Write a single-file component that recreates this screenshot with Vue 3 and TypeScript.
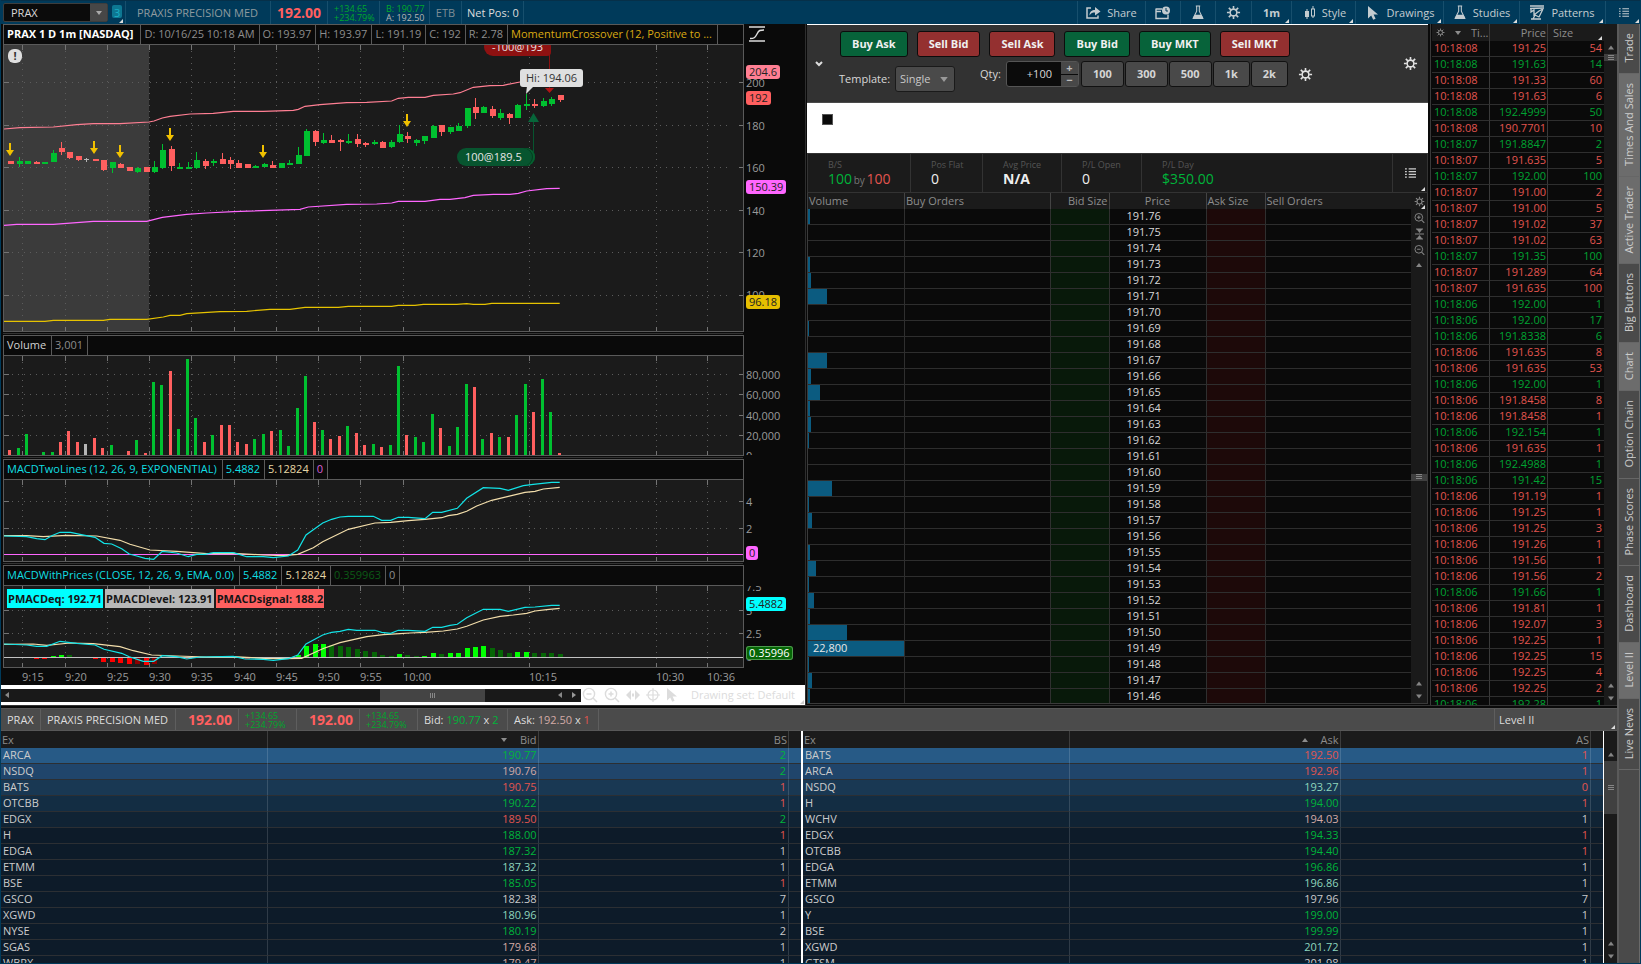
<script setup lang="ts">
type Tone = 'g' | 'r' | 'w' | 'p' | 't' | 'n'
type Pt = [number, number]

const quoteCells = ['D: 10/16/25 10:18 AM', 'O: 193.97', 'H: 193.97', 'L: 191.19', 'C: 192', 'R: 2.78']

/* ---- plot geometry ---- */
const PLOT_W = 739
const LEFT = 4
const pct = (v: number, total: number): string => `${(v / total) * 100}%`
const timeMarks = [
  { x: 18, label: '9:15' }, { x: 61, label: '9:20' }, { x: 103, label: '9:25' }, { x: 145, label: '9:30' },
  { x: 187, label: '9:35' }, { x: 230, label: '9:40' }, { x: 272, label: '9:45' }, { x: 314, label: '9:50' },
  { x: 356, label: '9:55' }, { x: 399, label: '10:00' }, { x: 525, label: '10:15' }, { x: 652, label: '10:30' },
  { x: 703, label: '10:36' },
]
const slotX = (k: number): number => Math.round(10.3 + 8.45 * k) - LEFT

/* series are sampled at three units per plot unit */
const line = (pts: Pt[], top: number): string =>
  pts.map(([x, y]) => `${(x / 3 - LEFT).toFixed(1)},${(y / 3 - top).toFixed(1)}`).join(' ')

/* colour, high, body top, body bottom, low */
const rawCandles: [Tone, number, number, number, number][] = [
  ['r', 483, 483, 491, 491], ['g', 471, 483, 491, 500], ['g', 483, 483, 491, 493], ['r', 483, 486, 491, 491],
  ['g', 486, 486, 491, 491], ['g', 450, 459, 485, 487], ['r', 426, 444, 456, 465], ['r', 457, 457, 474, 476],
  ['r', 468, 468, 479, 483], ['w', 473, 478, 481, 487], ['r', 477, 477, 482, 482], ['r', 480, 480, 510, 513],
  ['g', 486, 486, 504, 518], ['r', 488, 492, 503, 503], ['r', 501, 501, 513, 513], ['g', 500, 504, 515, 518],
  ['r', 501, 501, 515, 515], ['g', 483, 501, 515, 518], ['g', 432, 450, 503, 506], ['r', 437, 447, 498, 513],
  ['g', 489, 501, 507, 507], ['g', 486, 501, 507, 507], ['g', 456, 480, 504, 508], ['r', 477, 483, 497, 507],
  ['g', 477, 484, 489, 498], ['r', 459, 477, 491, 491], ['r', 471, 480, 491, 507], ['r', 479, 489, 503, 503],
  ['r', 492, 492, 503, 503], ['g', 495, 498, 503, 503], ['g', 488, 492, 500, 500], ['r', 483, 495, 503, 503],
  ['g', 489, 489, 503, 503], ['g', 480, 489, 494, 494], ['g', 441, 465, 491, 491], ['g', 387, 393, 467, 467],
  ['r', 389, 393, 426, 438], ['g', 399, 420, 429, 431], ['r', 405, 420, 429, 429], ['r', 416, 420, 425, 453],
  ['g', 402, 423, 429, 431], ['r', 402, 417, 431, 441], ['r', 426, 429, 435, 440], ['g', 420, 426, 431, 434],
  ['r', 423, 426, 443, 443], ['g', 420, 426, 440, 444], ['g', 376, 402, 425, 428], ['r', 396, 408, 416, 428],
  ['g', 416, 420, 429, 437], ['g', 408, 408, 422, 431], ['g', 375, 378, 413, 413], ['r', 375, 375, 395, 408],
  ['g', 381, 381, 395, 402], ['g', 369, 378, 392, 392], ['g', 324, 324, 378, 384], ['r', 294, 321, 338, 357],
  ['g', 318, 321, 338, 338], ['r', 318, 327, 347, 354], ['g', 327, 340, 353, 360], ['r', 339, 342, 353, 372],
  ['g', 311, 315, 353, 353], ['g', 282, 312, 317, 330], ['r', 297, 312, 318, 324], ['g', 294, 303, 317, 321],
  ['g', 291, 297, 311, 318], ['r', 285, 285, 299, 306],
]
const lvl = (v: number): number => Math.round(v / 3) - 45
const candles = rawCandles.map(([tone, h, t, b, l], k) => ({
  tone, x: slotX(k), h: lvl(h), t: lvl(t), bh: Math.max(1, lvl(b) - lvl(t)), wh: Math.max(1, lvl(l) - lvl(h)),
}))

const volHeights = [5, 7, 21, 0, 3, 3, 13, 24, 13, 11, 17, 7, 10, 0, 4, 15, 2, 73, 70, 84, 26, 96, 37, 13, 20, 30, 30,
  13, 11, 16, 21, 24, 25, 9, 47, 79, 33, 25, 16, 19, 29, 22, 10, 11, 8, 10, 89, 20, 18, 13, 41, 27, 9, 28, 71, 68, 16,
  22, 18, 18, 40, 71, 43, 76, 43, 2]
const volumes = volHeights.map((h, k) => ({ h, x: slotX(k) - 2, tone: rawCandles[k][0] }))

const histo: Record<number, [number, string]> = {
  0: [-2, 'dr'], 1: [-1, 'dr'], 2: [-2, 'r'], 3: [-5, 'r'], 4: [-5, 'r'], 5: [4, 'b'], 6: [7, 'b'], 7: [7, 'd'],
  9: [-2, 'r'], 10: [-5, 'r'], 11: [-14, 'r'], 12: [-14, 'r'], 13: [-17, 'r'], 14: [-20, 'r'], 15: [-20, 'dr'],
  16: [-23, 'r'], 17: [-20, 'dr'], 19: [-3, 'dr'], 20: [-3, 'dr'], 21: [-5, 'r'], 28: [-5, 'r'], 29: [-4, 'r'],
  31: [-3, 'r'], 34: [6, 'b'], 35: [33, 'b'], 36: [40, 'b'], 37: [40, 'b'], 38: [36, 'd'], 39: [34, 'd'],
  40: [30, 'd'], 41: [25, 'd'], 42: [19, 'd'], 43: [16, 'd'], 44: [7, 'd'], 45: [4, 'd'], 46: [10, 'b'],
  47: [6, 'd'], 48: [4, 'd'], 49: [4, 'b'], 50: [13, 'b'], 51: [10, 'd'], 52: [13, 'b'], 53: [13, 'b'],
  54: [28, 'b'], 55: [31, 'b'], 56: [34, 'b'], 57: [28, 'd'], 58: [22, 'd'], 59: [13, 'd'], 60: [16, 'b'],
  61: [16, 'b'], 62: [13, 'd'], 63: [13, 'd'], 64: [13, 'd'], 65: [10, 'd'],
}
const histoBars = Object.entries(histo).map(([k, [v, c]]) => {
  const h = Math.max(1, Math.round(Math.abs(v) / 3))
  return { x: slotX(Number(k)) - 2, y: v > 0 ? 71 - h : 71, h, c }
})

const upper = line([[12, 387], [60, 383], [160, 381], [230, 374], [280, 371], [360, 371], [447, 366], [462, 363],
  [487, 354], [510, 349], [570, 342], [640, 340], [700, 334], [790, 334], [880, 331], [895, 328], [915, 319],
  [960, 314], [1040, 308], [1100, 307], [1175, 303], [1195, 295], [1225, 292], [1275, 292], [1300, 286],
  [1360, 282], [1380, 278], [1420, 262], [1470, 257], [1510, 256], [1560, 246], [1640, 238]], 45)
const middle = line([[12, 676], [50, 673], [160, 673], [280, 664], [440, 664], [487, 652], [560, 643], [620, 639],
  [700, 635], [900, 628], [925, 621], [1040, 613], [1130, 612], [1175, 609], [1195, 604], [1275, 604], [1320, 598],
  [1350, 598], [1395, 593], [1420, 586], [1480, 583], [1530, 583], [1555, 580], [1580, 573], [1640, 566],
  [1679, 565]], 45)
const lower = line([[12, 964], [135, 964], [160, 961], [310, 961], [330, 958], [440, 958], [490, 951], [510, 946],
  [540, 946], [560, 941], [660, 935], [740, 934], [810, 928], [870, 928], [915, 922], [1015, 922], [1045, 919],
  [1175, 919], [1195, 916], [1245, 916], [1270, 913], [1370, 913], [1400, 911], [1420, 913], [1455, 913],
  [1475, 910], [1679, 910]], 45)
const macd = line([[12, 228], [80, 230], [110, 236], [135, 239], [155, 227], [180, 217], [212, 217], [240, 223],
  [285, 232], [312, 250], [335, 252], [365, 266], [388, 282], [410, 288], [435, 295], [461, 298], [487, 274],
  [530, 279], [565, 290], [590, 283], [615, 283], [640, 278], [700, 278], [740, 290], [790, 290], [820, 293],
  [865, 288], [893, 270], [918, 225], [940, 209], [968, 189], [995, 178], [1020, 171], [1045, 169], [1120, 169],
  [1145, 181], [1172, 181], [1195, 172], [1225, 172], [1275, 176], [1298, 157], [1325, 157], [1372, 145],
  [1400, 115], [1450, 83], [1500, 85], [1525, 91], [1570, 77], [1600, 73], [1655, 67], [1679, 67]], 20)
const signal = line([[12, 227], [80, 227], [130, 230], [200, 226], [290, 228], [360, 241], [390, 253], [450, 270],
  [530, 274], [620, 281], [700, 280], [790, 285], [850, 287], [893, 283], [940, 263], [968, 245], [1045, 208],
  [1125, 189], [1172, 187], [1225, 182], [1275, 178], [1325, 173], [1345, 167], [1372, 163], [1400, 154],
  [1430, 138], [1475, 121], [1525, 109], [1575, 97], [1605, 94], [1630, 87], [1679, 82]], 20)
const macd2 = line([[12, 552], [80, 555], [110, 559], [140, 559], [180, 544], [205, 547], [230, 550], [285, 555],
  [312, 568], [365, 580], [388, 590], [430, 604], [461, 604], [487, 587], [530, 590], [560, 597], [600, 591],
  [700, 589], [735, 597], [790, 598], [820, 601], [865, 596], [893, 585], [918, 552], [968, 525], [995, 517],
  [1020, 514], [1045, 508], [1070, 511], [1125, 511], [1145, 517], [1172, 520], [1195, 511], [1225, 511],
  [1275, 514], [1298, 502], [1325, 502], [1350, 496], [1372, 493], [1400, 473], [1450, 448], [1500, 448],
  [1525, 454], [1575, 442], [1605, 441], [1655, 436], [1679, 436]], 126)
const signal2 = line([[12, 553], [100, 552], [140, 556], [210, 549], [280, 551], [360, 560], [400, 572], [455, 585],
  [530, 588], [620, 591], [700, 590], [790, 595], [850, 596], [905, 595], [968, 566], [1020, 548], [1060, 539],
  [1100, 530], [1150, 524], [1200, 521], [1230, 519], [1275, 517], [1330, 513], [1372, 507], [1400, 499],
  [1450, 480], [1500, 469], [1540, 465], [1580, 460], [1605, 453], [1640, 449], [1679, 445]], 126)

const arrows: Pt[] = [[6, 98], [90, 96], [116, 100], [166, 83], [259, 100], [403, 69]]

interface Panel {
  id: string
  h: number
  grid: number[]
  labels: { y: number; t: string }[]
  tags: { y: number; t: string; c: string }[]
  head: { t: string; c: string }[]
}
const panels: Panel[] = [
  {
    id: 'price', h: 286, grid: [37, 80, 122, 165, 207, 250],
    labels: [{ y: 38, t: '200' }, { y: 81, t: '180' }, { y: 123, t: '160' }, { y: 166, t: '140' }, { y: 208, t: '120' }, { y: 250, t: '100' }],
    tags: [{ y: 27, t: '204.6', c: 'pink' }, { y: 53, t: '192', c: 'coral' }, { y: 142, t: '150.39', c: 'magenta' }, { y: 257, t: '96.18', c: 'gold' }],
    head: [{ t: 'PRAX 1 D 1m [NASDAQ]', c: 'strong' }, ...quoteCells.map((t) => ({ t, c: 'dim' })), { t: 'MomentumCrossover (12, Positive to ...', c: 'amber' }],
  },
  {
    id: 'volume', h: 99, grid: [18, 38, 59, 79],
    labels: [{ y: 19, t: '80,000' }, { y: 39, t: '60,000' }, { y: 60, t: '40,000' }, { y: 80, t: '20,000' }, { y: 100, t: '0' }],
    tags: [], head: [{ t: 'Volume', c: 'light' }, { t: '3,001', c: 'dim' }],
  },
  {
    id: 'macd', h: 81, grid: [21, 48],
    labels: [{ y: 22, t: '4' }, { y: 49, t: '2' }], tags: [{ y: 73, t: '0', c: 'magenta' }],
    head: [{ t: 'MACDTwoLines (12, 26, 9, EXPONENTIAL)', c: 'cyan' }, { t: '5.4882', c: 'cyan' }, { t: '5.12824', c: 'sand' }, { t: '0', c: 'violet' }],
  },
  {
    id: 'macdp', h: 81, grid: [24, 47],
    labels: [{ y: 1, t: '7.5' }, { y: 25, t: '5' }, { y: 48, t: '2.5' }, { y: 71, t: '0' }],
    tags: [{ y: 18, t: '5.4882', c: 'aqua' }, { y: 67, t: '0.35996', c: 'forest' }],
    head: [{ t: 'MACDWithPrices (CLOSE, 12, 26, 9, EMA, 0.0)', c: 'cyan' }, { t: '5.4882', c: 'cyan' }, { t: '5.12824', c: 'sand' }, { t: '0.359963', c: 'moss' }, { t: '0', c: 'dim' }],
  },
]

/* ---- order entry ---- */
const orderButtons = [
  { t: 'Buy Ask', side: 'buy' }, { t: 'Sell Bid', side: 'sell' }, { t: 'Sell Ask', side: 'sell' },
  { t: 'Buy Bid', side: 'buy' }, { t: 'Buy MKT', side: 'buy' }, { t: 'Sell MKT', side: 'sell' },
]
const sizes = ['100', '300', '500', '1k', '2k']

const bars = [2, 0, 0, 2, 3, 19, 0, 1, 0, 19, 3, 12, 2, 3, 1, 0, 0, 24, 1, 4, 0, 2, 8, 1, 6, 2, 39, 96, 1, 4, 2]
const ladder = bars.map((w, i) => ({ price: (191.76 - i * 0.01).toFixed(2), w, vol: w === 96 ? '22,800' : '' }))

const tape: [string, string, string, Tone][] = [
  ['08', '191.25', '54', 'r'], ['08', '191.63', '14', 'g'], ['08', '191.33', '60', 'r'], ['08', '191.63', '6', 'r'],
  ['08', '192.4999', '50', 'g'], ['08', '190.7701', '10', 'r'], ['07', '191.8847', '2', 'g'], ['07', '191.635', '5', 'r'],
  ['07', '192.00', '100', 'g'], ['07', '191.00', '2', 'r'], ['07', '191.00', '5', 'r'], ['07', '191.02', '37', 'r'],
  ['07', '191.02', '63', 'r'], ['07', '191.35', '100', 'g'], ['07', '191.289', '64', 'r'], ['07', '191.635', '100', 'r'],
  ['06', '192.00', '1', 'g'], ['06', '192.00', '17', 'g'], ['06', '191.8338', '6', 'g'], ['06', '191.635', '8', 'r'],
  ['06', '191.635', '53', 'r'], ['06', '192.00', '1', 'g'], ['06', '191.8458', '8', 'r'], ['06', '191.8458', '1', 'r'],
  ['06', '192.154', '1', 'g'], ['06', '191.635', '1', 'r'], ['06', '192.4988', '1', 'g'], ['06', '191.42', '15', 'g'],
  ['06', '191.19', '1', 'r'], ['06', '191.25', '1', 'r'], ['06', '191.25', '3', 'r'], ['06', '191.26', '1', 'r'],
  ['06', '191.56', '1', 'r'], ['06', '191.56', '2', 'r'], ['06', '191.66', '1', 'g'], ['06', '191.81', '1', 'r'],
  ['06', '192.07', '3', 'r'], ['06', '192.25', '1', 'r'], ['06', '192.25', '15', 'r'], ['06', '192.25', '4', 'r'],
  ['06', '192.25', '2', 'r'], ['06', '192.28', '1', 'g'],
]

const sideTabs = [
  { t: 'Trade', on: false }, { t: 'Times And Sales', on: true }, { t: 'Active Trader', on: true },
  { t: 'Big Buttons', on: false }, { t: 'Chart', on: true }, { t: 'Option Chain', on: false },
  { t: 'Phase Scores', on: false }, { t: 'Dashboard', on: false }, { t: 'Level II', on: true },
  { t: 'Live News', on: false },
]

type Quote = [string, string, Tone, string, Tone]
const books: { id: string; price: string; size: string; dir: string; rows: Quote[] }[] = [
  {
    id: 'bid', price: 'Bid', size: 'BS', dir: 'down',
    rows: [
      ['ARCA', '190.77', 'g', '2', 'g'], ['NSDQ', '190.76', 'p', '2', 'g'], ['BATS', '190.75', 'r', '1', 'r'],
      ['OTCBB', '190.22', 'g', '1', 'r'], ['EDGX', '189.50', 'r', '2', 'g'], ['H', '188.00', 'g', '1', 'r'],
      ['EDGA', '187.32', 'g', '1', 'n'], ['ETMM', '187.32', 't', '1', 'n'], ['BSE', '185.05', 'g', '1', 'r'],
      ['GSCO', '182.38', 'n', '7', 'n'], ['XGWD', '180.96', 't', '1', 'n'], ['NYSE', '180.19', 'g', '2', 'n'],
      ['SGAS', '179.68', 'p', '1', 'n'], ['WBPX', '179.47', 'p', '1', 'n'],
    ],
  },
  {
    id: 'ask', price: 'Ask', size: 'AS', dir: 'up',
    rows: [
      ['BATS', '192.50', 'r', '1', 'r'], ['ARCA', '192.96', 'r', '1', 'r'], ['NSDQ', '193.27', 't', '0', 'r'],
      ['H', '194.00', 'g', '1', 'r'], ['WCHV', '194.03', 'p', '1', 'n'], ['EDGX', '194.33', 'g', '1', 'r'],
      ['OTCBB', '194.40', 'g', '1', 'r'], ['EDGA', '196.86', 'g', '1', 'n'], ['ETMM', '196.86', 't', '1', 'n'],
      ['GSCO', '197.96', 'n', '7', 'n'], ['Y', '199.00', 'g', '1', 'n'], ['BSE', '199.99', 'g', '1', 'n'],
      ['XGWD', '201.72', 't', '1', 'n'], ['GTSM', '201.98', 'n', '1', 'n'],
    ],
  },
]
</script>

<template>
  <div class="app">
    <svg class="defs" aria-hidden="true">
      <symbol id="i-gear" viewBox="0 0 16 16">
        <circle cx="8" cy="8" r="3.6" fill="none" stroke="currentColor" stroke-width="1.7" />
        <path d="M8 1v3M8 12v3M1 8h3M12 8h3M3 3l2.2 2.2M10.8 10.8L13 13M3 13l2.2-2.2M10.8 5.2L13 3" stroke="currentColor" stroke-width="1.7" fill="none" />
      </symbol>
      <symbol id="i-flask" viewBox="0 0 16 18">
        <path d="M5.5 1.5h5M6.5 2v5.5L2.5 15.5M9.5 2v5.5l4 8" fill="none" stroke="currentColor" stroke-width="1.2" />
        <path d="M4.3 11.5h7.4l2.8 5h-13z" fill="currentColor" />
      </symbol>
      <symbol id="i-list" viewBox="0 0 12 12">
        <path d="M0 1.5h2M4 1.5h8M0 4.5h2M4 4.5h8M0 7.5h2M4 7.5h8M0 10.5h2M4 10.5h8" stroke="currentColor" stroke-width="1.2" />
      </symbol>
      <symbol id="i-up" viewBox="0 0 6 4"><path d="M0 4L3 0l3 4z" fill="currentColor" /></symbol>
      <symbol id="i-down" viewBox="0 0 6 4"><path d="M0 0l3 4 3-4z" fill="currentColor" /></symbol>
      <symbol id="i-grip" viewBox="0 0 6 6"><path d="M0 .5h6M0 2.5h6M0 4.5h6" stroke="currentColor" /></symbol>
      <symbol id="i-cursor" viewBox="0 0 12 14"><path d="M1 0v12.5l3.2-3 2 4.3 2.4-1-2-4.3H11z" fill="currentColor" /></symbol>
      <symbol id="i-zin" viewBox="0 0 16 16">
        <circle cx="7" cy="7" r="5.6" fill="none" stroke="currentColor" stroke-width="1.4" />
        <path d="M11 11l4 4M4.5 7h5M7 4.5v5" stroke="currentColor" stroke-width="1.5" />
      </symbol>
      <symbol id="i-zout" viewBox="0 0 16 16">
        <circle cx="7" cy="7" r="5.6" fill="none" stroke="currentColor" stroke-width="1.4" />
        <path d="M11 11l4 4M4.5 7h5" stroke="currentColor" stroke-width="1.5" />
      </symbol>
    </svg>

    <header class="topbar">
      <div class="symbol">
        <input aria-label="Symbol" value="PRAX" />
        <button aria-label="Symbol list"><svg class="i-caret"><use href="#i-down" /></svg></button>
      </div>
      <button class="link-badge corner">3</button>
      <div class="tcell name">PRAXIS PRECISION MED</div>
      <div class="tcell last">192.00</div>
      <div class="tcell stack up"><span>+134.65</span><span>+234.79%</span></div>
      <div class="tcell stack ba"><span class="up">B: 190.77</span><span>A: 192.50</span></div>
      <div class="tcell etb">ETB</div>
      <div class="tcell net">Net Pos: 0</div>
      <nav class="tools">
        <button class="w68">
          <svg width="15" height="13" viewBox="0 0 15 13"><path d="M5 2H1v10h11V9.500" fill="none" stroke="currentColor" stroke-width="1.500" /><path d="M3.500 9.500C3.500 5.500 6 4 9 4V1l5.500 4.500L9 9.500v-3C6.500 6.500 5 7 3.500 9.500z" fill="currentColor" /></svg>
          Share
        </button>
        <button class="w35" aria-label="Saved workspaces">
          <svg width="16" height="14" viewBox="0 0 16 14"><path d="M1 3h6M1 5.500h5M1 2.500v10h12v-4" fill="none" stroke="currentColor" stroke-width="1.400" /><circle cx="11" cy="4.500" r="4" fill="currentColor" /><path d="M11 2v3h2" stroke="#003a5a" fill="none" /></svg>
        </button>
        <button class="w35" aria-label="Edit studies"><svg width="14" height="17"><use href="#i-flask" /></svg></button>
        <button class="w36" aria-label="Settings"><svg width="15" height="15"><use href="#i-gear" /></svg></button>
        <button class="w40 corner strong">1m</button>
        <button class="w64 corner">
          <svg width="12" height="14" viewBox="0 0 12 14"><path d="M3 3v10M9 0v12" stroke="currentColor" /><rect x="1" y="5" width="4" height="6" fill="currentColor" /><rect x="7.500" y="3" width="3" height="7" fill="#003a5a" stroke="currentColor" /></svg>
          Style
        </button>
        <button class="w88 corner"><svg width="12" height="14"><use href="#i-cursor" /></svg>Drawings</button>
        <button class="w76 corner"><svg width="14" height="17"><use href="#i-flask" /></svg>Studies</button>
        <button class="w86 corner">
          <svg width="15" height="15" viewBox="0 0 15 15"><path d="M0 1h14M0 3.500L14 3M1 3v4l3-2v5l5-4 4-2M3 14l2-4 4 2 4-8M1 14h10" fill="none" stroke="currentColor" stroke-width="1.300" /></svg>
          Patterns
        </button>
        <button class="w36 corner" aria-label="Menu"><svg width="10" height="11"><use href="#i-list" /></svg></button>
      </nav>
    </header>

    <div class="body">
      <div class="left">
        <div class="upper">
          <section class="chart" aria-label="Chart">
            <div v-for="p in panels" :key="p.id" class="study" :class="`s-${p.id}`">
              <div class="plotcol">
                <div class="shead"><span v-for="(c, i) in p.head" :key="i" :class="c.c">{{ c.t }}</span></div>
                <div class="plot">
                  <svg class="canvas" :viewBox="`0 0 ${PLOT_W} ${p.h}`" preserveAspectRatio="none">
                    <rect v-if="p.id === 'price'" width="145" height="286" fill="#3b3b3b" />
                    <g class="grid">
                      <line v-for="g in p.grid" :key="g" class="dots" x1="2" x2="727" :y1="g + 0.5" :y2="g + 0.5" />
                      <line v-for="m in timeMarks" :key="m.x" class="dots" :x1="m.x + 0.5" :x2="m.x + 0.5" y1="0" :y2="p.h" />
                      <path v-for="m in timeMarks" :key="m.label" :d="`M${m.x + 0.5} 0v5M${m.x + 0.5} ${p.h}v-4`" />
                      <path v-for="g in p.grid" :key="`t${g}`" :d="`M0 ${g + 0.5}h5M735 ${g + 0.5}h4`" />
                    </g>
                    <template v-if="p.id === 'price'">
                      <polyline :points="upper" stroke="#ff7f93" />
                      <polyline :points="middle" stroke="#ff66ff" />
                      <polyline :points="lower" stroke="#e6c300" />
                      <g class="crisp">
                        <template v-for="(c, k) in candles" :key="k">
                          <rect :class="`f-${c.tone}`" :x="c.x" :y="c.h" width="1" :height="c.wh" />
                          <rect :class="`f-${c.tone}`" :x="c.x - 2" :y="c.t" :width="c.tone === 'w' ? 5 : 6" :height="c.bh" />
                        </template>
                      </g>
                      <path v-for="a in arrows" :key="a[0]" :d="`M${a[0] - 1} ${a[1]}h2v7h3l-4 6l-4-6h3z`" fill="#f0c000" />
                      <path d="M545.5 0v43" stroke="#8b1010" />
                      <path d="M541 43h9l-4.500 5z" fill="#b01515" />
                      <path d="M529.500 76v34" stroke="#07552f" />
                      <path d="M524 77h11l-5.500-9z" fill="#07663a" />
                      <path d="M523 41l-1 8 8-8z" fill="#dfe0e0" />
                    </template>
                    <g v-else-if="p.id === 'volume'" class="crisp">
                      <rect v-for="(v, k) in volumes" :key="k" :class="`f-${v.tone}`" :x="v.x" :y="99 - v.h" width="3" :height="v.h" />
                    </g>
                    <template v-else-if="p.id === 'macd'">
                      <path d="M0 74.500h739" stroke="#ff66ff" />
                      <polyline :points="signal" stroke="#f3deab" />
                      <polyline :points="macd" stroke="#12e4e8" />
                    </template>
                    <template v-else>
                      <g class="crisp">
                        <rect v-for="b in histoBars" :key="b.x" :class="`h-${b.c}`" :x="b.x" :y="b.y" width="5" :height="b.h" />
                      </g>
                      <path d="M0 71.500h739" stroke="#c2c2c2" />
                      <polyline :points="signal2" stroke="#f3deab" />
                      <polyline :points="macd2" stroke="#12e4e8" />
                    </template>
                  </svg>
                  <template v-if="p.id === 'price'">
                    <span class="warn">!</span>
                    <span class="fill sellfill" :style="{ left: pct(480, PLOT_W) }">-100@193</span>
                    <span class="fill buyfill" :style="{ left: pct(453, PLOT_W), top: pct(103, p.h) }">100@189.5</span>
                    <span class="hi" :style="{ left: pct(516, PLOT_W), top: pct(24, p.h) }">Hi: 194.06</span>
                  </template>
                  <div v-if="p.id === 'macdp'" class="chips">
                    <b class="c1">PMACDeq: 192.71</b><b class="c2">PMACDlevel: 123.91</b><b class="c3">PMACDsignal: 188.2</b>
                  </div>
                </div>
              </div>
              <div class="axis">
                <svg v-if="p.id === 'price'" class="scale-ico" width="16" height="16" viewBox="0 0 16 16"><path d="M0 1h16M0 15h16" stroke="#ddd" stroke-width="1.500" /><path d="M1 12.500c4 0 5-.5 7-4.500s3-4 7-4" fill="none" stroke="#ddd" stroke-width="1.400" /></svg>
                <div class="ticks">
                  <span v-for="l in p.labels" :key="l.t" :style="{ top: pct(l.y, p.h) }">{{ l.t }}</span>
                  <b v-for="t in p.tags" :key="t.t" :class="t.c" :style="{ top: pct(t.y, p.h) }">{{ t.t }}</b>
                </div>
              </div>
            </div>
            <div class="times">
              <div class="timeline"><span v-for="m in timeMarks" :key="m.x" :style="{ left: pct(m.x, PLOT_W) }">{{ m.label }}</span></div>
            </div>
            <div class="strip">
              <div class="hscroll">
                <svg class="la" width="4" height="6" viewBox="0 0 4 6"><path d="M4 0v6L0 3z" fill="#888" /></svg>
                <div class="hthumb"><i></i><i></i><i></i></div>
                <svg class="lb" width="4" height="6" viewBox="0 0 4 6"><path d="M4 0v6L0 3z" fill="#888" /></svg>
                <svg class="lc" width="4" height="6" viewBox="0 0 4 6"><path d="M0 0v6l4-3z" fill="#999" /></svg>
              </div>
              <div class="ztools">
                <svg width="16" height="16"><use href="#i-zout" /></svg>
                <svg width="16" height="16"><use href="#i-zin" /></svg>
                <svg width="14" height="10" viewBox="0 0 14 10"><path d="M5 0v10L0 5zM9 0v10l5-5zM6 3.500h2v3H6z" fill="currentColor" /></svg>
                <svg width="14" height="14" viewBox="0 0 14 14"><circle cx="7" cy="7" r="5" fill="none" stroke="currentColor" stroke-width="1.200" /><path d="M7 0v14M0 7h14" stroke="currentColor" stroke-width="1.200" /></svg>
                <svg width="12" height="14"><use href="#i-cursor" /></svg>
              </div>
              <button class="dset corner">Drawing set: Default</button>
            </div>
          </section>

          <section class="trader" aria-label="Active Trader">
            <div class="entry">
              <button class="chev" aria-label="Collapse"><svg width="8" height="6" viewBox="0 0 8 6"><path d="M1 1l3 3 3-3" fill="none" stroke="currentColor" stroke-width="2" /></svg></button>
              <div class="controls">
                <div class="orders"><button v-for="b in orderButtons" :key="b.t" :class="b.side">{{ b.t }}</button></div>
                <div class="params">
                  <label for="tpl">Template:</label>
                  <div class="selwrap"><select id="tpl"><option>Single</option></select><svg><use href="#i-down" /></svg></div>
                  <label for="qty" class="lq">Qty:</label>
                  <div class="qty">
                    <input id="qty" value="+100" />
                    <div class="spin"><button aria-label="Increase">+</button><button aria-label="Decrease">−</button></div>
                  </div>
                  <div class="sizes"><button v-for="s in sizes" :key="s">{{ s }}</button></div>
                  <button class="bare" aria-label="Quantity settings"><svg width="15" height="15"><use href="#i-gear" /></svg></button>
                </div>
              </div>
              <button class="bare far" aria-label="Panel settings"><svg width="15" height="15"><use href="#i-gear" /></svg></button>
            </div>
            <div class="blank"><span></span></div>
            <div class="stats">
              <div class="st1"><small>B/S</small><p><span class="g">100</span> <em>by</em> <span class="r">100</span></p></div>
              <div class="st2"><small>Pos Flat</small><p>0</p></div>
              <div class="st3"><small>Avg Price</small><p><b>N/A</b></p></div>
              <div class="st4"><small>P/L Open</small><p>0</p></div>
              <div class="st5"><small>P/L Day</small><p class="g">$350.00</p></div>
              <button class="bare corner" aria-label="Columns"><svg width="11" height="12"><use href="#i-list" /></svg></button>
            </div>
            <div class="ladder">
              <table>
                <colgroup><col class="k97" /><col /><col class="k59" /><col class="k97" /><col class="k59" /><col /></colgroup>
                <thead>
                  <tr><th>Volume</th><th>Buy Orders</th><th class="ra">Bid Size</th><th class="ca">Price</th><th>Ask Size</th><th>Sell Orders</th></tr>
                </thead>
                <tbody>
                  <tr v-for="r in ladder" :key="r.price">
                    <td><div class="vbar" :style="{ width: pct(r.w, 96) }">{{ r.vol }}</div></td>
                    <td></td><td class="bidc"></td><td class="pr">{{ r.price }}</td><td class="askc"></td><td></td>
                  </tr>
                </tbody>
              </table>
              <div class="rail">
                <span class="cellbox corner"><svg width="11" height="11"><use href="#i-gear" /></svg></span>
                <svg width="11" height="16"><use href="#i-zin" /></svg>
                <svg width="9" height="16" viewBox="0 0 9 16"><path d="M0 8h9M1 3h7M1 13h7" stroke="currentColor" /><path d="M1.500 3h6l-3 4zM1.500 13h6l-3-4z" fill="currentColor" /></svg>
                <svg width="11" height="16"><use href="#i-zout" /></svg>
                <svg class="tri t14"><use href="#i-up" /></svg>
                <span class="sp2"></span>
                <span class="grip"><svg width="6" height="6"><use href="#i-grip" /></svg></span>
                <span class="sp1"></span>
                <svg class="tri t13"><use href="#i-up" /></svg>
                <svg class="tri t13"><use href="#i-down" /></svg>
              </div>
            </div>
          </section>

          <section class="tape" aria-label="Times And Sales">
            <table>
              <colgroup><col class="k58" /><col class="k58" /><col /></colgroup>
              <thead>
                <tr>
                  <th><div class="tih"><svg width="9" height="9"><use href="#i-gear" /></svg><svg class="tri"><use href="#i-down" /></svg>Ti...</div></th>
                  <th class="ra">Price</th><th class="szh corner">Size</th>
                </tr>
              </thead>
              <tbody>
                <tr v-for="(t, i) in tape" :key="i" :class="t[3]"><td>10:18:{{ t[0] }}</td><td class="ra">{{ t[1] }}</td><td class="ra">{{ t[2] }}</td></tr>
              </tbody>
            </table>
            <div class="rail">
              <span class="hsp"></span>
              <svg class="tri t13"><use href="#i-up" /></svg>
              <span class="grip"><svg width="6" height="6"><use href="#i-grip" /></svg></span>
              <span class="sp1"></span>
              <svg class="tri t13"><use href="#i-up" /></svg>
              <svg class="tri t13"><use href="#i-down" /></svg>
            </div>
          </section>
        </div>

        <section class="level2" aria-label="Level II">
          <div class="l2bar">
            <span class="a">PRAX</span><span class="b">PRAXIS PRECISION MED</span>
            <span class="c">192.00</span><span class="d stack"><i>+134.65</i><i>+234.79%</i></span>
            <span class="c">192.00</span><span class="e stack"><i>+134.65</i><i>+234.79%</i></span>
            <span class="f">Bid: <em class="g">190.77</em> x <em class="g">2</em></span>
            <span class="h">Ask: <em class="p">192.50</em> x <em class="r">1</em></span>
            <button class="corner">Level II</button>
          </div>
          <div class="books">
            <div v-for="b in books" :key="b.id" class="book" :class="b.id">
              <table>
                <colgroup><col class="q1" /><col class="q2" /><col class="q3" /><col /></colgroup>
                <thead>
                  <tr><th>Ex</th><th class="ra"><svg class="tri"><use :href="`#i-${b.dir}`" /></svg>{{ b.price }}</th><th class="ra">{{ b.size }}</th><th></th></tr>
                </thead>
                <tbody>
                  <tr v-for="(q, i) in b.rows" :key="i" :class="`d${Math.min(i, 5)}`">
                    <td>{{ q[0] }}</td><td class="ra" :class="q[2]">{{ q[1] }}</td><td class="ra qs" :class="q[4]">{{ q[3] }}</td><td></td>
                  </tr>
                </tbody>
              </table>
            </div>
            <div class="rail">
              <span class="hsp"></span>
              <svg class="tri t13"><use href="#i-up" /></svg>
              <span class="grip tall"><svg width="6" height="6"><use href="#i-grip" /></svg></span>
              <span class="sp1"></span>
              <svg class="tri t13"><use href="#i-up" /></svg>
              <svg class="tri t13"><use href="#i-down" /></svg>
            </div>
          </div>
        </section>
      </div>
      <nav class="side"><button v-for="t in sideTabs" :key="t.t" :class="{ on: t.on }"><span>{{ t.t }}</span></button></nav>
    </div>
  </div>
</template>

<style>
html, body { margin: 0; background: #0a0a0a; }
</style>

<style scoped>
* { box-sizing: border-box; }
.app { height: 100vh; overflow: hidden; display: flex; flex-direction: column; background: #0a0a0a; color: #ccc; font: 11px/16px "Open Sans", "Noto Sans", sans-serif; border: 1px solid #003a5a; border-top: 0; }
button, input, select { font: inherit; color: inherit; margin: 0; border: 0; border-radius: 0; padding: 0; background: none; }
p { margin: 0; }
em, i { font-style: normal; }
.defs { position: absolute; width: 0; height: 0; }
.corner { position: relative; }
.corner::after { content: ""; position: absolute; right: 2px; bottom: 1px; border-left: 4px solid transparent; border-bottom: 4px solid #ddd; }
.g { color: #00b43a; }
.r { color: #e2554f; }
.p { color: #d3aaa6; }
.t { color: #8fd6bd; }
.n { color: #c9c9c9; }
.ra { text-align: right; }
.ca { text-align: center; }
.stack { display: flex; flex-direction: column; justify-content: center; align-items: flex-start; font-size: 9px; line-height: 9px; }
.tri { width: 6px; height: 4px; flex: none; }
table { border-spacing: 0; table-layout: fixed; width: 100%; }
th { font-weight: 400; text-align: left; color: #8c8c8c; background: #1b1b1b; }
th, td { padding: 0; white-space: nowrap; }
td { vertical-align: top; }

/* top bar */
.topbar { flex: none; height: 24px; margin: 0 -1px; background: #003a5a; display: flex; align-items: stretch; padding-left: 3px; border-top: 1px solid #063049; }
.symbol { width: 105px; margin: 2px 0; background: #0b0b0b; border: 1px solid #3d3d3d; border-radius: 2px; display: flex; }
.symbol input { flex: 1; min-width: 0; padding-left: 7px; color: #d8d8d8; outline: 0; }
.symbol button { width: 17px; background: #474747; display: flex; align-items: center; justify-content: center; color: #aaa; }
.i-caret { width: 8px; height: 4px; }
.link-badge { width: 17px; padding-left: 6px; color: #23c5dc; line-height: 12px; display: flex; align-items: center; }
.link-badge::before { content: ""; position: absolute; left: 4px; top: 4px; width: 10px; height: 13px; background: #15a0b899; border-radius: 2px; }
.tcell { border-left: 1px solid #174f6d; display: flex; align-items: center; white-space: nowrap; flex: none; }
.name { width: 145px; padding-left: 11px; color: #8f9a9f; }
.last { width: 57px; padding-left: 6px; color: #ff5f5f; font-weight: 700; font-size: 14px; }
.tcell.stack { justify-content: center; align-items: flex-start; width: 52px; padding-left: 6px; }
.up { color: #00a82c; }
.tcell.ba { width: 50px; color: #b5b5b5; }
.etb { width: 32px; justify-content: center; color: #7e8d95; }
.net { width: 63px; padding-left: 5px; color: #ddd; border-right: 1px solid #174f6d; }
.tools { margin-left: auto; display: flex; }
.tools button { border-left: 1px solid #174f6d; display: flex; align-items: center; justify-content: center; gap: 6px; color: #c3ccd0; }
.tools .w88 { gap: 8px; padding-left: 2px; }
.tools .w64 { padding-left: 3px; }
.tools .strong { font-weight: 700; color: #c3ccd0; }
.w68 { width: 68px; } .w35 { width: 35px; } .w36 { width: 36px; } .w40 { width: 40px; } .w64 { width: 64px; }
.w88 { width: 88px; } .w76 { width: 76px; } .w86 { width: 86px; }

.body { flex: 1; min-height: 0; display: flex; }
.left { flex: 1; min-width: 0; display: flex; flex-direction: column; }
.upper { flex: 681 1 0; min-height: 0; display: flex; }

/* chart */
.chart { flex: 804 1 0; min-width: 0; display: flex; flex-direction: column; border-right: 1px solid #2e2e2e; }
.study { min-height: 0; display: flex; padding-left: 2px; margin-bottom: 3px; position: relative; }
.study::after { content: ""; position: absolute; left: 2px; right: 62px; bottom: -2px; height: 1px; background: #333; }
.s-price { flex: 308 1 0; } .s-volume { flex: 121 1 0; } .s-macd { flex: 103 1 0; } .s-macdp { flex: 103 1 0; margin-bottom: 0; }
.s-macdp::after { display: none; }
.plotcol { flex: 1; min-width: 0; display: flex; flex-direction: column; border: 1px solid #5a5a5a; }
.shead { flex: none; height: 20px; border-bottom: 1px solid #5a5a5a; display: flex; white-space: nowrap; line-height: 18px; background: #0a0a0a; }
.shead span { padding: 0 4px 0 3px; border-right: 1px solid #5a5a5a; }
.shead span:first-child { padding-right: 5px; }
.shead .strong:first-child { padding-right: 7px; }
.strong { font-weight: 700; color: #fff; }
.dim { color: #8d8d8d; } .light { color: #d2d2d2; } .amber { color: #d9a912; } .cyan { color: #10dfe3; }
.shead .amber { padding-right: 5px; }
.sand { color: #e6d6a5; } .violet { color: #d65fd6; } .moss { color: #0c5a16; }
.plot { position: relative; flex: 1; min-height: 0; background: #1b1b1b; overflow: hidden; }
.canvas { position: absolute; inset: 0; width: 100%; height: 100%; }
.canvas polyline { fill: none; stroke-width: 1.2; }
.grid { stroke: #747474; shape-rendering: crispEdges; }
.grid .dots { stroke: #5c5c5c; stroke-dasharray: 1 5; }
.crisp { shape-rendering: crispEdges; }
.f-g { fill: #00c030; } .f-r { fill: #ff5f5f; } .f-w { fill: #b5b5b5; }
.h-b { fill: #00ff00; } .h-d { fill: #066606; } .h-r { fill: #ff0000; } .h-dr { fill: #8b0000; }
.warn { position: absolute; left: 4px; top: 4px; width: 14px; height: 14px; border-radius: 6px; background: #dfdfdf; color: #333; font-weight: 700; line-height: 14px; text-align: center; }
.fill { position: absolute; color: #e6e6e6; border-radius: 9px; height: 18px; line-height: 18px; padding: 0 8px; }
.sellfill { top: -7px; background: #8e1111; border-radius: 9px 9px 4px 9px; }
.buyfill { background: #07552f; padding-right: 13px; box-shadow: inset -2px 0 #06602f, inset -3px 0 #043d20; }
.hi { position: absolute; background: #dfe0e0; color: #333; border-radius: 3px; height: 18px; line-height: 18px; padding: 0 6px; white-space: nowrap; }
.chips { position: absolute; left: 3px; top: 3px; display: flex; gap: 2px; color: #151515; line-height: 19px; }
.chips b { padding: 0 1px; white-space: nowrap; }
.c1 { background: #00ffff; } .c2 { background: #b8b8b8; } .c3 { background: #ff6060; }
.axis { width: 61px; flex: none; padding-top: 21px; display: flex; position: relative; color: #9a9a9a; }
.scale-ico { position: absolute; left: 5px; top: 2px; }
.ticks { flex: 1; position: relative; margin-bottom: 1px; overflow: hidden; }
.ticks span, .ticks b { position: absolute; left: 2px; font-weight: 400; line-height: 12px; margin-top: -6px; }
.ticks b { padding: 0 3px; border-radius: 3px; color: #222; line-height: 14px; margin-top: -7px; }
.pink { background: #ff7f93; } .coral { background: #ff5f5f; } .magenta { background: #ff66ff; } .gold { background: #e6bf00; }
.aqua { background: #00ffff; }
.ticks .forest { background: #066606; color: #fff; box-shadow: inset 0 0 0 1px #4e9a4e; }
.times { flex: none; height: 17px; padding: 0 62px 0 3px; color: #9a9a9a; }
.timeline { position: relative; height: 17px; }
.timeline span { position: absolute; top: 1px; }
.strip { flex: none; height: 20px; background: #fff; display: flex; align-items: center; color: #dcdcdc; }
.hscroll { flex: 1; height: 13px; background: #191919; display: flex; align-items: center; }
.hscroll .la { margin-left: 4px; }
.hthumb { margin-left: 64%; width: 18%; height: 13px; background: #444; display: flex; justify-content: center; align-items: center; gap: 1px; }
.hthumb i { width: 1px; height: 5px; background: #888; }
.lb { margin-left: auto; margin-right: 10px; }
.lc { margin-right: 5px; }
.ztools { display: flex; align-items: center; width: 110px; justify-content: space-between; padding: 0 13px 0 1px; }
.dset { width: 114px; text-align: left; height: 20px; white-space: nowrap; }
.dset::after { border-bottom-color: #ccc; right: 1px; }

/* active trader */
.trader { flex: 621 1 0; min-width: 0; display: flex; flex-direction: column; padding: 0 2px 1px 1px; }
.entry { flex: none; height: 79px; background: #323232; border-top: 1px solid #fff; border-bottom: 1px solid #4a4a4a; display: flex; }
.chev { width: 23px; color: #ddd; display: flex; align-items: center; justify-content: center; }
.controls { padding: 6px 0 0 9px; }
.orders { display: flex; gap: 9px; padding-left: 1px; }
.orders button { height: 26px; padding: 0 11px; font-weight: 700; color: #f0f0f0; border: 1px solid #0c0c0c; border-radius: 3px; }
.buy { background: #07633a; } .sell { background: #943030; }
.params { display: flex; align-items: flex-start; color: #d8d8d8; white-space: nowrap; padding-top: 4px; }
.params label { margin-top: 10px; width: 56px; }
.params label.lq { margin: 5px 0 0 25px; width: 26px; }
.selwrap { position: relative; margin-top: 5px; }
.selwrap select { appearance: none; width: 60px; height: 26px; background: #4a4a4a; border: 1px solid #1a1a1a; border-radius: 3px; padding-left: 4px; color: #c8c8c8; }
.selwrap svg { position: absolute; right: 7px; top: 11px; width: 8px; height: 5px; color: #999; }
.qty { width: 73px; height: 26px; background: #0b0b0b; border: 1px solid #555; border-radius: 3px; display: flex; }
.qty input { flex: 1; min-width: 0; text-align: right; padding-right: 9px; outline: 0; }
.spin { width: 17px; display: flex; flex-direction: column; gap: 1px; }
.spin button { flex: 1; background: #484848; color: #bbb; font-weight: 700; line-height: 10px; }
.sizes { display: flex; gap: 1px; margin-left: 2px; }
.sizes button { height: 26px; padding: 0 11px; font-weight: 700; background: #494949; border: 1px solid #111; border-radius: 3px; color: #d5d5d5; }
.bare { color: #e2e2e2; display: flex; align-items: center; justify-content: center; }
.params .bare { height: 26px; margin-left: 10px; }
.far { margin-left: auto; width: 36px; }
.blank { flex: none; height: 50px; background: #fff; padding: 11px 15px; }
.blank span { display: block; width: 11px; height: 11px; background: #0a0a0a; border: 1px solid #555; }
.stats { flex: none; height: 40px; background: #1b1b1b; border: 1px solid #333; display: flex; }
.stats div { padding: 2px 0 0 20px; border-right: 1px solid #333; }
.stats div + .st5 { border: 0; flex: 1; }
.stats small { display: block; font-size: 9px; line-height: 15px; height: 14px; color: #555; padding-top: 1px; }
.stats p { font-size: 14px; line-height: 18px; color: #eee; white-space: nowrap; }
.stats p.g { color: #00b43a; }
.stats em { font-size: 10px; color: #777; margin: 0 -2px; }
.st1 { width: 103px; } .st2 { width: 72px; } .st3 { width: 79px; } .st4 { width: 80px; }
.stats .bare { width: 35px; border-left: 1px solid #333; color: #ccc; }
.ladder { flex: 1; min-height: 0; display: flex; overflow: hidden; border: 1px solid #3a3a3a; border-top: 0; }
.ladder table { width: calc(100% - 16px); align-self: flex-start; }
.k97 { width: 97px; } .k59 { width: 59px; } .k58 { width: 58px; }
.ladder th { height: 16px; line-height: 16px; border-right: 1px solid #444; padding: 0 1px; }
.ladder td { height: 16px; line-height: 14px; border-right: 1px solid #2f2f2f; border-bottom: 1px solid #2e2e2e; background: #0a0a0a; }
.ladder th:last-child, .ladder td:last-child { border-right: 0; }
.ladder .bidc { background: #08190a; } .ladder .askc { background: #1d0909; }
.ladder .pr { padding-left: 17px; color: #d8d8d8; }
.vbar { height: 15px; background: #0b5b80; color: #e8e8e8; text-indent: 5px; overflow: hidden; }
.rail { flex: none; width: 16px; background: #1a1a1a; display: flex; flex-direction: column; align-items: center; color: #858585; }
.cellbox { width: 16px; height: 17px; display: flex; align-items: center; justify-content: center; }
.t14 { height: 14px; } .t13 { height: 13px; }
.sp1 { flex: 100 1 0; }
.sp2 { flex: 103 1 0; }
.grip { width: 100%; height: 7px; background: #404040; display: flex; align-items: center; justify-content: center; }
.grip.tall { height: 53px; }
.hsp { height: 17px; }

/* times and sales */
.tape { flex: none; width: 187px; border-left: 1px solid #3a3a3a; padding-left: 1px; display: flex; overflow: hidden; }
.tape table { width: calc(100% - 13px); align-self: flex-start; }
.tape .rail { width: 13px; }
.tape th { height: 17px; line-height: 16px; border-right: 1px solid #3a3a3a; }
.tape td { height: 16px; line-height: 14px; border-right: 1px solid #3a3a3a; border-bottom: 1px solid #2f2f2f; padding-left: 2px; }
.tape tr.g { color: #00a332; } .tape tr.r { color: #e2554f; }
.tape th.ra, .tape td.ra { padding-right: 1px; }
.tape td:last-child.ra { padding-right: 2px; border-right: 0; }
.tape .szh { padding-left: 5px; border-right: 0; }
.tih { display: flex; align-items: center; padding-left: 4px; gap: 10px; }

/* level II */
.level2 { flex: 255 1 0; min-height: 0; display: flex; flex-direction: column; border-top: 1px solid #333; padding-top: 2px; }
.l2bar { flex: none; height: 23px; background: #4b4b4b; border: 1px solid #585858; border-width: 1px 0; display: flex; color: #ddd; line-height: 21px; white-space: nowrap; }
.l2bar > span { border-right: 1px solid #5e5e5e; padding-left: 6px; }
.l2bar .a { width: 40px; } .l2bar .b { width: 135px; }
.l2bar .c { width: 63px; padding-left: 12px; color: #ff5f5f; font-weight: 700; font-size: 14px; }
.l2bar .d { width: 58px; } .l2bar .e { width: 58px; }
.l2bar .stack { color: #00a82c; line-height: 9px; }
.l2bar .f { width: 90px; } .l2bar .h { width: 91px; }
.l2bar button { margin-left: auto; width: 123px; border-left: 1px solid #5e5e5e; text-align: left; padding-left: 4px; }
.books { flex: 1; min-height: 0; display: flex; overflow: hidden; }
.book { flex: 1 1 0; min-width: 0; border-right: 2px solid #fff; }
.ask { border-right-width: 1px; }
.q1 { width: 33.4%; } .q2 { width: 33.8%; } .q3 { width: 31.3%; }
.book th { height: 17px; line-height: 17px; border-right: 1px solid #3d3d3d; padding: 0 1px; }
.book th .tri { margin: 0 13px 3px 0; display: inline; vertical-align: middle; }
.book td { height: 16px; line-height: 14px; padding: 0 1px 0 2px; border-right: 1px solid #ffffff24; border-bottom: 1px solid #2c2f33; }
.book td.qs { padding-right: 2px; }
.book td:last-child, .book th:last-child { border-right: 0; }
.d0 { background: #275a86; } .d1 { background: #20456b; } .d2 { background: #193853; } .d3 { background: #132d43; } .d4 { background: #102334; } .d5 { background: #0d1b29; }
.books .rail { width: 13px; }

/* side tabs */
.side { flex: none; width: 23px; background: #4a4a4a; border-left: 2px solid #5a5a5a; border-right: 1px solid #6a6a6a; display: flex; flex-direction: column; }
.side button { padding: 9px 0 10px; width: 20px; background: #4a4a4a; border-bottom: 1px solid #666; color: #ccc; display: flex; justify-content: center; }
.side .on { background: #6c6c6c; }
.side span { writing-mode: vertical-rl; transform: rotate(180deg); line-height: 18px; white-space: nowrap; }
</style>
